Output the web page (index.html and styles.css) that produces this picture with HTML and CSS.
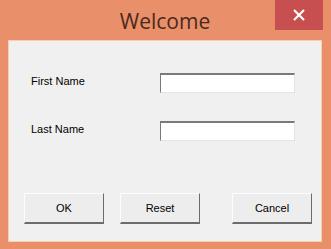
FILE: index.html
```html
<!DOCTYPE html>
<html lang="en">
<head>
    <meta charset="UTF-8">
    <title>Welcome</title>
    <link rel="stylesheet" href="styles.css">
</head>
<body>
    <div class="window">
        <!-- Title bar -->
        <div class="titlebar">
            <span class="title">Welcome</span>
            <button class="close" type="button" aria-label="Close">
                <svg width="14" height="14" viewBox="0 0 14 14">
                    <path d="M2 2 L12 12 M12 2 L2 12" stroke="#fff" stroke-width="2.2" fill="none"/>
                </svg>
            </button>
        </div>

        <!-- Client area -->
        <form class="client">
            <div class="field">
                <label for="first">First Name</label>
                <input type="text" id="first" name="first">
            </div>
            <div class="field">
                <label for="last">Last Name</label>
                <input type="text" id="last" name="last">
            </div>

            <div class="actions">
                <button type="submit" class="btn">OK</button>
                <button type="reset" class="btn">Reset</button>
                <button type="button" class="btn btn-cancel">Cancel</button>
            </div>
        </form>
    </div>
</body>
</html>
```

FILE: styles.css
```css
/* Colors */
:root {
    --frame: #e98f69;
    --close: #c84f4f;
    --client: #f0f0f0;
    --title-text: #4a2a1e;
}

body {
    margin: 0;
    font-family: "Liberation Sans", Arial, sans-serif;
    font-size: 11px;
    color: #000;
}

.window {
    width: 331px;
    height: 249px;
    box-sizing: border-box;
    background: var(--frame);
    padding: 0 9px 7px 8px;
    display: flex;
    flex-direction: column;
}

/* Title bar */
.titlebar {
    height: 40px;
    flex-shrink: 0;
    position: relative;
    display: flex;
    justify-content: center;
}

.title {
    font-family: "Open Sans", sans-serif;
    font-size: 21px;
    line-height: 40px;
    color: var(--title-text);
    margin-top: 1px;
}

.close {
    position: absolute;
    top: 0;
    right: -1px;
    width: 48px;
    height: 30px;
    border: none;
    padding: 0;
    background: var(--close);
    display: flex;
    align-items: center;
    justify-content: center;
}

/* Client area */
.client {
    flex: 1;
    margin: 0;
    background: var(--client);
    border: 1px solid #f7cdb5;
    padding: 32px 0 0 0;
}

.field {
    display: flex;
    align-items: center;
    height: 20px;
    margin-bottom: 28px;
    padding-left: 22px;
}

.field label {
    width: 129px;
    margin-bottom: 5px;
}

.field input {
    width: 135px;
    height: 20px;
    box-sizing: border-box;
    margin: 0;
    padding: 0 3px;
    background: #fff;
    border: 1px solid;
    border-color: #7a7a7a #e3e3e3 #e3e3e3 #7a7a7a;
    border-top-width: 2px;
    outline: none;
}

.actions {
    display: flex;
    gap: 16px;
    margin-top: 52px;
    padding-left: 15px;
}

.btn {
    width: 80px;
    height: 31px;
    box-sizing: border-box;
    background: #ededed;
    border: 1px solid;
    border-color: #fdfdfd #6c6c6c #6c6c6c #fdfdfd;
    border-bottom-width: 2px;
    font-family: "Liberation Sans", Arial, sans-serif;
    font-size: 11px;
    color: #000;
    padding: 0;
}

.btn-cancel {
    margin-left: 16px;
}
```
